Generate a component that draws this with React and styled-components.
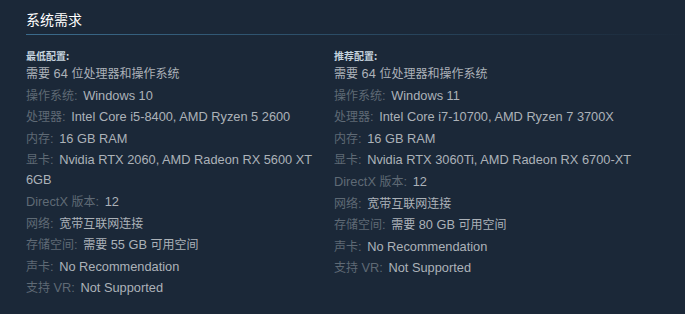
import React from 'react'
import styled, { createGlobalStyle } from 'styled-components'

const GlobalStyle = createGlobalStyle`
  body {
    margin: 0;
    background: #1b2838;
    font-family: "Liberation Sans", "Noto Sans CJK SC", sans-serif;
  }
`

const minimum = [
  { value: '需要 64 位处理器和操作系统' },
  { label: '操作系统:', value: 'Windows 10' },
  { label: '处理器:', value: 'Intel Core i5-8400, AMD Ryzen 5 2600' },
  { label: '内存:', value: '16 GB RAM' },
  { label: '显卡:', value: 'Nvidia RTX 2060, AMD Radeon RX 5600 XT 6GB' },
  { label: 'DirectX 版本:', value: '12' },
  { label: '网络:', value: '宽带互联网连接' },
  { label: '存储空间:', value: '需要 55 GB 可用空间' },
  { label: '声卡:', value: 'No Recommendation' },
  { label: '支持 VR:', value: 'Not Supported' },
]

const recommended = [
  { value: '需要 64 位处理器和操作系统' },
  { label: '操作系统:', value: 'Windows 11' },
  { label: '处理器:', value: 'Intel Core i7-10700, AMD Ryzen 7 3700X' },
  { label: '内存:', value: '16 GB RAM' },
  { label: '显卡:', value: 'Nvidia RTX 3060Ti, AMD Radeon RX 6700-XT' },
  { label: 'DirectX 版本:', value: '12' },
  { label: '网络:', value: '宽带互联网连接' },
  { label: '存储空间:', value: '需要 80 GB 可用空间' },
  { label: '声卡:', value: 'No Recommendation' },
  { label: '支持 VR:', value: 'Not Supported' },
]

// chinese glyphs render a touch smaller than the latin ones on steam
const Mixed = ({ text }) =>
  text.split(/([\u4e00-\u9fff]+)/).map((part, i) =>
    /[\u4e00-\u9fff]/.test(part) ? <Cjk key={i}>{part}</Cjk> : part
  )

const Column = ({ title, items }) => (
  <Col>
    <ColTitle>{title}</ColTitle>
    <List>
      {items.map((it, i) => (
        <Item key={i}>
          {it.label && (
            <Label>
              <Mixed text={it.label} />
            </Label>
          )}
          {it.label ? ' ' : ''}
          <Mixed text={it.value} />
        </Item>
      ))}
    </List>
  </Col>
)

const App = () => {
  return (
    <Page>
      <GlobalStyle />
      <Heading>系统需求</Heading>
      <Columns>
        <Column title="最低配置:" items={minimum} />
        <Column title="推荐配置:" items={recommended} />
      </Columns>
    </Page>
  )
}

export default App

const Page = styled.div`
  padding: 10px 0 0 26px;
  height: 304px;
`
const Heading = styled.h2`
  margin: 0;
  padding-bottom: 5px;
  font-family: "Noto Sans CJK SC", sans-serif;
  font-size: 14px;
  font-weight: normal;
  line-height: 19px;
  color: #ffffff;
  border-bottom: 1px solid transparent;
  border-image: linear-gradient(90deg, #3b6b8c 0%, #2a4a63 50%, #1b2838 100%) 1;
`
const Columns = styled.div`
  display: grid;
  grid-template-columns: 304px 304px;
  column-gap: 4px;
  margin-top: 13px;
`
const Col = styled.div`
  display: flex;
  flex-direction: column;
`
const ColTitle = styled.div`
  font-family: "Noto Sans CJK SC", sans-serif;
  font-size: 10px;
  font-weight: bold;
  line-height: 15px;
  margin-bottom: 1px;
  color: #c6d4df;
`
const List = styled.ul`
  list-style: none;
  margin: 0;
  padding: 0;
`
const Item = styled.li`
  font-size: 12.8px;
  line-height: 20px;
  margin-bottom: 1.6px;
  color: #acb2b8;
`
const Label = styled.span`
  margin-right: 2px;
  color: #5f6a75;
`
const Cjk = styled.span`
  font-family: "Noto Sans CJK SC", sans-serif;
  font-size: 12px;
  line-height: 12px;
`
